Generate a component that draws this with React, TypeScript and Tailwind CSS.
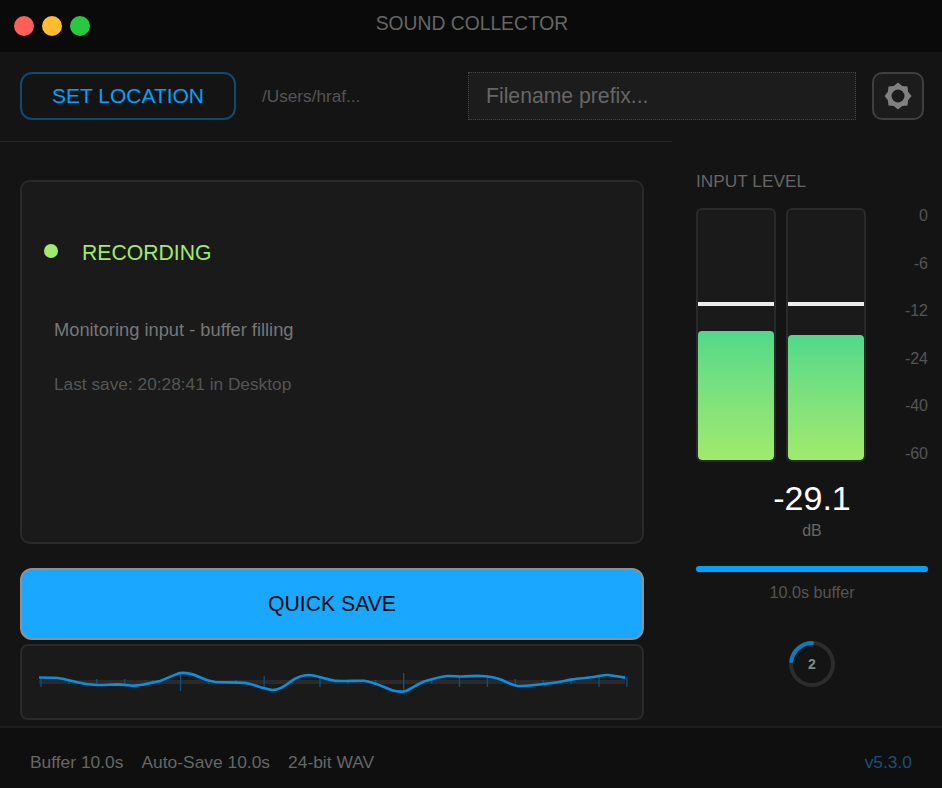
const levels = [5, 2, 3, 3, 2, 9, 2, 2, 6, 2, 5, 2, 2, 9, 2, 5, 5, 3, 2, 2, 5, 5];

const wave = "M39 677.5 C45 677.5 52 677.5 58 678 C64 678.7 70 680.5 76 682 C82 683.5 88 684.6 96 685 C104 685.2 110 684.4 118 684.4 C124 684.6 128 685.6 134 685.6 C142 685.4 150 683.4 160 681 C166 679 172 675.5 180 673 C186 672.6 192 673.5 198 676.5 C203 679 208 681 215 682 C222 682.6 236 682.2 246 683 C254 684.5 262 688.5 272 690 C280 690 286 685 292 680.5 C297 677 302 675.4 309 675 C316 675.2 324 678.5 334 680.6 C342 681.6 354 680.6 364 680.8 C372 681.4 384 687 393 690.6 C397 691.6 402 692 406 691 C412 688 418 684 424 681.5 C432 679 440 676.8 447 676 C453 675.8 458 676.6 464 676.4 C470 676 476 675.6 482 676 C490 676.4 496 677.6 502 680 C508 683 512 685.2 518 686 C526 686.4 540 684.6 552 683 C560 682 566 680.4 572 679.4 C580 678.2 590 678 596 676.6 C600 675.6 604 674.6 608 675 C614 675.8 620 677 625 677.6";

const Meter = ({ fill }: { fill: number }) => (
  <div className="relative flex h-[254px] w-[80px] flex-col justify-end overflow-hidden rounded-[6px] border-2 border-[#2a2a2a] bg-[#1a1a1a]">
    <div className="absolute left-0 right-0 top-[92px] h-[4px] bg-[#ececec]" />
    <div className="rounded-[4px] bg-gradient-to-b from-[#50d98a] to-[#a0ea6c]" style={{ height: fill }} />
  </div>
);

const Waveform = () => (
  <svg viewBox="22 646 620 72" className="block h-[72px] w-[620px]">
    <rect x="39" y="680" width="586" height="4" fill="#2a2a2a" />
    {levels.map((h, i) => {
      const x = 41 + i * 27.9;
      return <line key={i} x1={x} x2={x} y1={682 - h} y2={682 + h} stroke="#0f4f78" strokeWidth="1.4" />;
    })}
    <path d={wave} fill="none" stroke="#0a90e0" strokeWidth="2.6" />
  </svg>
);

const Gear = () => (
  <svg viewBox="0 0 28 28" className="h-[28px] w-[28px]">
    <path
      fillRule="evenodd"
      fill="#808080"
      d="M14 0.5 L18.2 3.9 L23.5 4.5 L24.1 9.8 L27.5 14 L24.1 18.2 L23.5 23.5 L18.2 24.1 L14 27.5 L9.8 24.1 L4.5 23.5 L3.9 18.2 L0.5 14 L3.9 9.8 L4.5 4.5 L9.8 3.9 Z M14 7.5 A6.5 6.5 0 1 0 14 20.5 A6.5 6.5 0 1 0 14 7.5 Z"
    />
  </svg>
);

const Ring = () => (
  <div className="relative flex h-[46px] w-[46px] items-center justify-center">
    <svg viewBox="0 0 46 46" className="absolute inset-0 h-[46px] w-[46px]">
      <circle cx="23" cy="23" r="21" fill="none" stroke="#2c2c2c" strokeWidth="4" />
      <path d="M23 2 A21 21 0 0 0 2.3 20" fill="none" stroke="#0a7cc0" strokeWidth="4" strokeLinecap="round" />
    </svg>
    <span className="text-[14px] font-bold leading-none text-[#888888]">2</span>
  </div>
);

export default function App() {
  return (
    <div className="flex h-[788px] w-[942px] flex-col overflow-hidden bg-[#141414] font-['Liberation_Sans',Arial,sans-serif]">
      <div className="grid h-[52px] grid-cols-[1fr_auto_1fr] items-center bg-[#0a0a0a] pb-[4px] pl-[14px] pr-[12px]">
        <div className="flex translate-y-[2px] gap-2">
          <div className="h-5 w-5 rounded-full bg-[#ff5f57]" />
          <div className="h-5 w-5 rounded-full bg-[#febc2e]" />
          <div className="h-5 w-5 rounded-full bg-[#28c840]" />
        </div>
        <div className="text-[19.3px] text-[#666666]">SOUND COLLECTOR</div>
        <div />
      </div>

      <div className="flex h-[89px] items-start bg-[#141414] pl-5 pr-[18px] pt-5">
        <button className="h-12 w-[216px] rounded-[12px] border-2 border-[#0f4a72] text-[21px] text-[#00a2ff]">SET LOCATION</button>
        <div className="ml-[26px] w-[206px] text-[17.2px] leading-[48px] text-[#555555]">/Users/hraf...</div>
        <div className="flex h-12 w-[388px] items-center border border-dotted border-[#444444] bg-[#1c1c1c] pl-[17px] text-[21.2px] text-[#666666]">Filename prefix...</div>
        <button className="ml-4 flex h-12 w-[52px] items-center justify-center rounded-[10px] border-2 border-[#3f3f3f] bg-[#1c1c1c]">
          <Gear />
        </button>
      </div>

      <div className="flex flex-1">
        <div className="w-[672px] border-t border-[#262626] pl-5 pr-7 pt-[38px]">
          <div className="h-[364px] rounded-[10px] border-2 border-[#2a2a2a] bg-[#1a1a1a] pl-[22px] pt-[59px]">
            <div className="flex items-center gap-6">
              <div className="mb-1 h-[14px] w-[14px] rounded-full bg-[#a0ea6c]" />
              <div className="text-[21.2px] leading-6 text-[#a0ea6c]">RECORDING</div>
            </div>
            <div className="ml-[10px] mt-[53px] text-[18.3px] leading-6 text-[#777777]">Monitoring input - buffer filling</div>
            <div className="ml-[10px] mt-[30px] text-[17.3px] leading-6 text-[#555555]">Last save: 20:28:41 in Desktop</div>
          </div>
          <button className="mt-6 h-[72px] w-full rounded-[12px] border-2 border-[#909090] bg-[#1aa7ff] text-[21.2px] text-[#0a0a0a]">QUICK SAVE</button>
          <div className="mt-1 h-[76px] rounded-[8px] border-2 border-[#2a2a2a] bg-[#1a1a1a]">
            <Waveform />
          </div>
        </div>

        <div className="flex w-[270px] flex-col pl-6 pr-[14px] pt-[30px]">
          <div className="text-[17.3px] leading-5 text-[#666666]">INPUT LEVEL</div>
          <div className="mt-[17px] flex">
            <div className="flex gap-[10px]">
              <Meter fill={129} />
              <Meter fill={125} />
            </div>
            <div className="flex h-[254px] flex-1 flex-col items-end justify-between text-[16px] leading-4 text-[#555555]">
              <span>0</span>
              <span>-6</span>
              <span>-12</span>
              <span>-24</span>
              <span>-40</span>
              <span>-60</span>
            </div>
          </div>
          <div className="mt-[18px] text-center text-[34px] leading-9 text-white">-29.1</div>
          <div className="mt-[5px] text-center text-[16px] leading-5 text-[#666666]">dB</div>
          <div className="mt-[25px] h-[6px] rounded-full bg-[#00a2ff]" />
          <div className="mt-[10px] text-center text-[16.2px] leading-5 text-[#555555]">10.0s buffer</div>
          <div className="mt-[39px] flex justify-center">
            <Ring />
          </div>
        </div>
      </div>

      <div className="flex h-[62px] items-center justify-between border-t-2 border-[#1c1c1c] bg-[#0f0f0f] pl-[30px] pr-[30px] pt-[8px] text-[17.4px] text-[#666666]">
        <div className="flex gap-[18px]">
          <span>Buffer 10.0s</span>
          <span>Auto-Save 10.0s</span>
          <span>24-bit WAV</span>
        </div>
        <span className="text-[#1a4f78]">v5.3.0</span>
      </div>
    </div>
  );
}
